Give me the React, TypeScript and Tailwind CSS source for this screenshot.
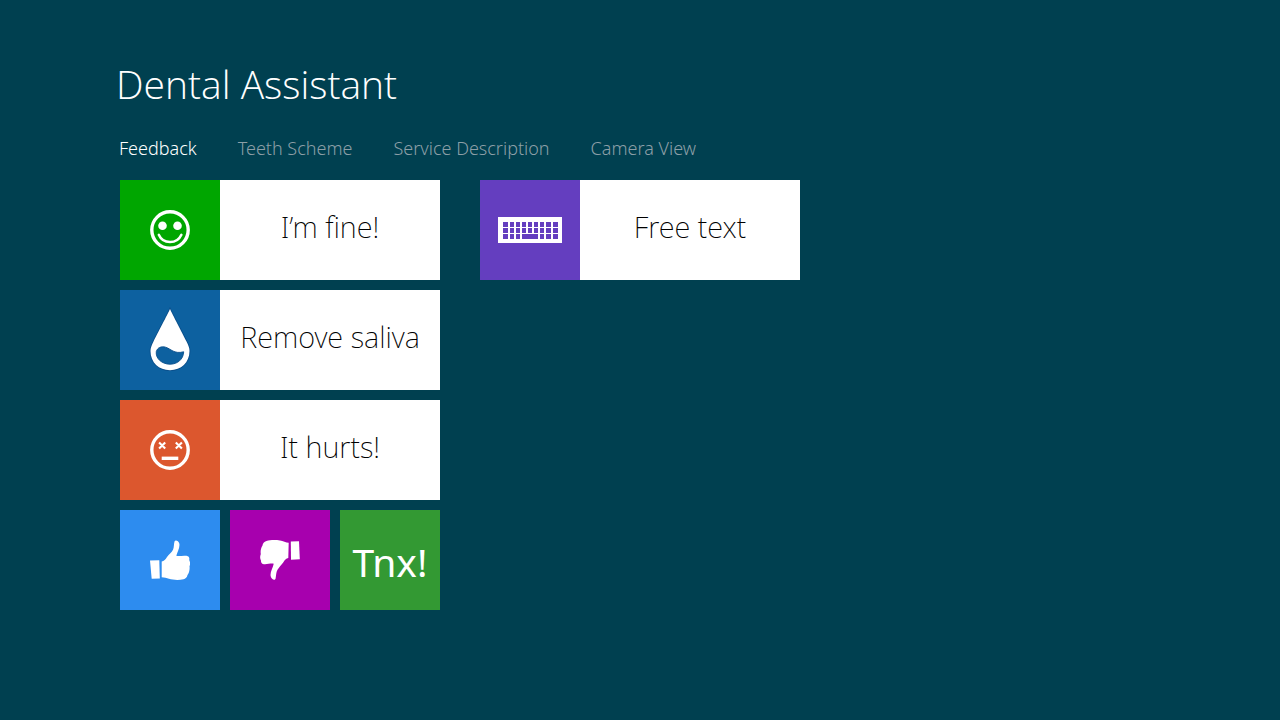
import { useState } from "react";
import type { ReactNode } from "react";

const tabs = ["Feedback", "Teeth Scheme", "Service Description", "Camera View"];

function SmileIcon() {
  return (
    <svg viewBox="0 0 40 40" className="size-10" fill="none" stroke="white" aria-hidden="true">
      <circle cx="20" cy="20" r="18.2" strokeWidth="3.4" />
      <circle cx="12.5" cy="15.7" r="4.3" fill="white" stroke="none" />
      <circle cx="27.5" cy="15.7" r="4.3" fill="white" stroke="none" />
      <path d="M8.8 24.8C13 34.5 27 34.5 31.4 24.8" strokeWidth="2.5" strokeLinecap="round" />
    </svg>
  );
}

function DropIcon() {
  return (
    <svg viewBox="0 0 40 62" className="h-[62px] w-10 overflow-visible" aria-hidden="true">
      <path
        d="M20 0C22 4.5 33 25.5 36.5 32.5C38.5 36.5 39.5 39 39.5 42C39.5 53.5 31 61.2 20 61.2C9 61.2 0.5 53.5 0.5 42C0.5 39 1.5 36.5 3.5 32.5C7 25.5 18 4.5 20 0Z"
        fill="white"
        stroke="#0a4f8c"
        strokeWidth="1.8"
        paintOrder="stroke"
      />
      <path
        d="M6.3 42.5C7.3 38.8 11 37 15.5 38.2C21 39.8 24 45.3 33.7 42.8C33.3 50.5 27.5 55.2 20 55.2C12 55.2 5.3 49.5 6.3 42.5Z"
        fill="#0d61a0"
        stroke="#0a4f8c"
        strokeWidth="0.9"
      />
    </svg>
  );
}

function HurtIcon() {
  return (
    <svg viewBox="0 0 40 40" className="size-10" fill="none" stroke="white" aria-hidden="true">
      <circle cx="20" cy="20" r="18.2" strokeWidth="3.4" />
      <path d="M9.1 12.4L15.2 18.5M15.2 12.4L9.1 18.5M25.8 12.4L31.9 18.5M31.9 12.4L25.8 18.5" strokeWidth="2.1" />
      <path d="M11.7 28.3H28.3" strokeWidth="3.4" />
    </svg>
  );
}

function KeyboardIcon() {
  return (
    <svg viewBox="0 0 64 26" className="h-[26px] w-16" shapeRendering="crispEdges" aria-hidden="true">
      <path d="M0 0H64V26H0Z" fill="white" />
      <path
        d="M5 5h5v5h-5zM12 5h4v5h-4zM18 5h4v5h-4zM24 5h4v5h-4zM30 5h4v5h-4zM36 5h4v5h-4zM42 5h4v5h-4zM48 5h5v5h-5zM55 5h5v5h-5zM5 11h5v5h-5zM12 11h4v5h-4zM18 11h4v5h-4zM24 11h4v5h-4zM30 11h4v5h-4zM36 11h4v5h-4zM42 11h4v5h-4zM48 11h5v5h-5zM55 11h5v5h-5zM5 17h5v5h-5zM12 17h4v5h-4zM18 17h4v5h-4zM24 17h16v5h-16zM42 17h4v5h-4zM48 17h5v5h-5zM55 17h5v5h-5z"
        fill="#643ebf"
      />
    </svg>
  );
}

function ThumbUpIcon() {
  return (
    <svg viewBox="0 0 40 40" className="size-10" fill="white" aria-hidden="true">
      <path d="M0 20.5L9.3 20.2L9.8 38.5L1.7 38.7Z" />
      <path d="M11.7 21.5C14 21 15.5 19.5 17 17C18.5 14.5 21.8 12.5 23 9.8C24.2 7 23.7 4 24.5 1.5C25 -0.2 28.5 0.3 29.3 3.5C30.2 7.5 27.3 12 26.3 15.8C29 16.4 33 15.3 36.5 15.8C39 16.2 39.7 18 39.2 20C40.3 22 40.3 24.5 39.5 26.2C40 29.5 39 33 37.5 35C37 37.5 35.5 38.7 33.5 39.2C29 40.3 23 40 19 38.8C16.5 38 14.5 37.3 11.7 37.2Z" />
    </svg>
  );
}

function ThumbDownIcon() {
  return (
    <svg viewBox="0 0 40 40" className="size-10" fill="white" aria-hidden="true">
      <path d="M30.8 1.5L39 1.3L39.8 19.2L31 19.7Z" />
      <path d="M28.7 2.7C26 2.7 23 1 20 0.5C15 -0.2 10 0 6.5 1C4 1.7 2.8 3.5 2.5 5.5C0.8 8 0.3 11.5 0.8 14C-0.2 16.5 0 19 1 20.5C0.8 22.8 2 24 4 24.2C7 24.5 10.5 23.3 13.7 23.7C13 28 9.8 32 10.7 36.3C11.5 39.7 15 41 15.6 38.5C16.2 35.5 16 32.5 17.5 29.8C19 27.2 21.5 25 23.2 22.5C24.7 20 26 18.3 28.3 18Z" />
    </svg>
  );
}

function WideTile({ color, icon, label }: { color: string; icon: ReactNode; label: string }) {
  return (
    <button type="button" className="flex h-[100px] w-full bg-white text-black">
      <span className={`flex h-full w-[100px] shrink-0 items-center justify-center ${color}`}>{icon}</span>
      <span className="flex h-full flex-1 items-center justify-center pb-1.5 text-[29px] leading-10 font-extralight whitespace-nowrap">
        {label}
      </span>
    </button>
  );
}

function SmallTile({ color, label, children }: { color: string; label: string; children: ReactNode }) {
  return (
    <button
      type="button"
      aria-label={label}
      className={`flex h-[100px] items-center justify-center text-white ${color}`}
    >
      {children}
    </button>
  );
}

export default function App() {
  const [active, setActive] = useState(tabs[0]);

  return (
    <div className="min-h-screen bg-[#004050] px-[120px] pt-14 pb-10 font-['Noto_Sans','Open_Sans',sans-serif] text-white">
      <header>
        <h1 className="-ml-1 font-['Open_Sans','Noto_Sans',sans-serif] text-[39px] leading-[56px] font-light">
          Dental Assistant
        </h1>
        <nav className="mt-5 -ml-px flex flex-wrap gap-x-[41px]">
          {tabs.map((tab) => (
            <button
              key={tab}
              type="button"
              onClick={() => setActive(tab)}
              className={
                tab === active
                  ? "text-[18px] leading-8 font-light text-white"
                  : "text-[18px] leading-8 font-light text-[#8c9fa7]"
              }
            >
              {tab}
            </button>
          ))}
        </nav>
      </header>
      <main className="mt-4 flex flex-wrap items-start gap-10">
        <section className="flex w-80 flex-col gap-2.5">
          <WideTile color="bg-[#00a600]" icon={<SmileIcon />} label="I’m fine!" />
          <WideTile color="bg-[#0d61a0]" icon={<DropIcon />} label="Remove saliva" />
          <WideTile color="bg-[#dc572e]" icon={<HurtIcon />} label="It hurts!" />
          <div className="grid grid-cols-3 gap-2.5">
            <SmallTile color="bg-[#2d8cef]" label="Thumbs up">
              <ThumbUpIcon />
            </SmallTile>
            <SmallTile color="bg-[#a700ae]" label="Thumbs down">
              <ThumbDownIcon />
            </SmallTile>
            <SmallTile color="bg-[#339933]" label="Tnx!">
              <span className="pt-1 text-[39px] leading-[56px]">Tnx!</span>
            </SmallTile>
          </div>
        </section>
        <section className="w-80">
          <WideTile color="bg-[#643ebf]" icon={<KeyboardIcon />} label="Free text" />
        </section>
      </main>
    </div>
  );
}
